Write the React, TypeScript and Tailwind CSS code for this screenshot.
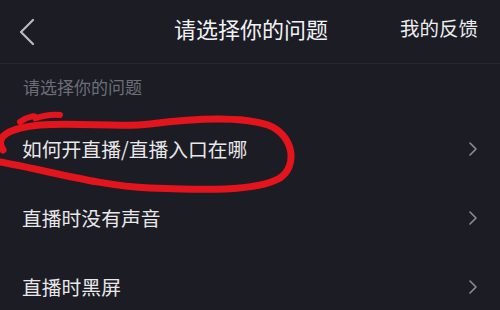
import React from "react";

const font = { fontFamily: '"Noto Sans CJK SC", "Noto Sans", sans-serif' };

function Chevron() {
  return (
    <svg width="10" height="16" viewBox="0 0 10 16" className="shrink-0">
      <polyline points="2,2 8,8 2,14" fill="none" stroke="#8c8d93" strokeWidth="1.6" strokeLinecap="round" strokeLinejoin="round" />
    </svg>
  );
}

const rows = ["如何开直播/直播入口在哪", "直播时没有声音", "直播时黑屏"];

export default function App() {
  return (
    <div className="relative w-[500px] h-[310px] overflow-hidden bg-[#1b1c24]" style={font}>
      <div className="h-[64px] flex items-center justify-between pl-[18px] pr-[22px] border-b border-[#272830]">
        <svg width="18" height="28" viewBox="0 0 18 28">
          <polyline points="15,2 3,14 15,26" fill="none" stroke="#b9babf" strokeWidth="2.2" strokeLinecap="round" strokeLinejoin="round" />
        </svg>
        <div className="absolute left-0 right-0 top-0 h-[64px] flex items-center justify-center pointer-events-none">
          <span className="text-[22px] text-[#f2f2f4] leading-none pb-[8px] pl-[2px]">请选择你的问题</span>
        </div>
        <span className="text-[19.5px] text-[#ececef] leading-none pb-[8px]">我的反馈</span>
      </div>
      <div className="h-[50px] pl-[23px] pt-[11px]">
        <span className="text-[17px] text-[#6c6e76] leading-none">请选择你的问题</span>
      </div>
      {rows.map((r) => (
        <div key={r} className="h-[69px] flex items-center justify-between pl-[22px] pr-[22px]">
          <span className="text-[19.8px] text-[#e8e8ea] leading-none">{r}</span>
          <Chevron />
        </div>
      ))}
      <svg className="absolute left-0 top-0 pointer-events-none" width="500" height="310" viewBox="0 0 500 310">
        <path
          d="M 3 150 C -6 136, 10 128, 40 125 C 80 122, 120 128, 150 124 C 190 119, 240 116, 268 125 C 294 135, 298 166, 280 178 C 256 192, 200 190, 150 188 C 100 186, 50 171, 0 162"
          fill="none" stroke="#e3141b" strokeWidth="7" strokeLinecap="round" strokeLinejoin="round" />
        <path d="M 20 122 C 28 116, 40 114, 33 119 C 42 116, 52 114, 60 115" fill="none" stroke="#e3141b" strokeWidth="6" strokeLinecap="round" />
      </svg>
    </div>
  );
}
